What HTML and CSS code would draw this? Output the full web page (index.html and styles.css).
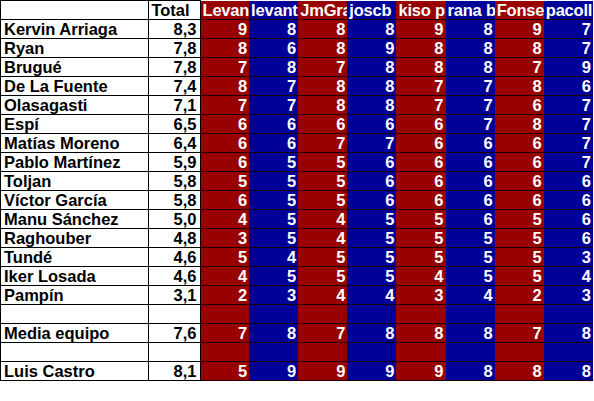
FILE: index.html
```html
<!DOCTYPE html>
<html lang="es">
<head>
<meta charset="utf-8">
<title>Notas</title>
<link rel="stylesheet" href="styles.css">
</head>
<body>
<table class="grid">
  <colgroup>
    <col class="c-name"><col class="c-total">
    <col class="c-v"><col class="c-v"><col class="c-v"><col class="c-v">
    <col class="c-v"><col class="c-v"><col class="c-v"><col class="c-v">
  </colgroup>
  <thead>
    <tr>
      <th class="name"></th><th class="total">Total</th>
      <th class="r">Levan</th><th class="b">levant</th><th class="r">JmGra</th><th class="b">joscb</th>
      <th class="r">kiso p</th><th class="b">rana b</th><th class="r">Fonse</th><th class="b">pacoll</th>
    </tr>
  </thead>
  <tbody>
    <tr><td class="name">Kervin Arriaga</td><td class="total">8,3</td><td class="r">9</td><td class="b">8</td><td class="r">8</td><td class="b">8</td><td class="r">9</td><td class="b">8</td><td class="r">9</td><td class="b">7</td></tr>
    <tr><td class="name">Ryan</td><td class="total">7,8</td><td class="r">8</td><td class="b">6</td><td class="r">8</td><td class="b">9</td><td class="r">8</td><td class="b">8</td><td class="r">8</td><td class="b">7</td></tr>
    <tr><td class="name">Brugué</td><td class="total">7,8</td><td class="r">7</td><td class="b">8</td><td class="r">7</td><td class="b">8</td><td class="r">8</td><td class="b">8</td><td class="r">7</td><td class="b">9</td></tr>
    <tr><td class="name">De La Fuente</td><td class="total">7,4</td><td class="r">8</td><td class="b">7</td><td class="r">8</td><td class="b">8</td><td class="r">7</td><td class="b">7</td><td class="r">8</td><td class="b">6</td></tr>
    <tr><td class="name">Olasagasti</td><td class="total">7,1</td><td class="r">7</td><td class="b">7</td><td class="r">8</td><td class="b">8</td><td class="r">7</td><td class="b">7</td><td class="r">6</td><td class="b">7</td></tr>
    <tr><td class="name">Espí</td><td class="total">6,5</td><td class="r">6</td><td class="b">6</td><td class="r">6</td><td class="b">6</td><td class="r">6</td><td class="b">7</td><td class="r">8</td><td class="b">7</td></tr>
    <tr><td class="name">Matías Moreno</td><td class="total">6,4</td><td class="r">6</td><td class="b">6</td><td class="r">7</td><td class="b">7</td><td class="r">6</td><td class="b">6</td><td class="r">6</td><td class="b">7</td></tr>
    <tr><td class="name">Pablo Martínez</td><td class="total">5,9</td><td class="r">6</td><td class="b">5</td><td class="r">5</td><td class="b">6</td><td class="r">6</td><td class="b">6</td><td class="r">6</td><td class="b">7</td></tr>
    <tr><td class="name">Toljan</td><td class="total">5,8</td><td class="r">5</td><td class="b">5</td><td class="r">5</td><td class="b">6</td><td class="r">6</td><td class="b">6</td><td class="r">6</td><td class="b">6</td></tr>
    <tr><td class="name">Víctor García</td><td class="total">5,8</td><td class="r">6</td><td class="b">5</td><td class="r">5</td><td class="b">6</td><td class="r">6</td><td class="b">6</td><td class="r">6</td><td class="b">6</td></tr>
    <tr><td class="name">Manu Sánchez</td><td class="total">5,0</td><td class="r">4</td><td class="b">5</td><td class="r">4</td><td class="b">5</td><td class="r">5</td><td class="b">6</td><td class="r">5</td><td class="b">6</td></tr>
    <tr><td class="name">Raghouber</td><td class="total">4,8</td><td class="r">3</td><td class="b">5</td><td class="r">4</td><td class="b">5</td><td class="r">5</td><td class="b">5</td><td class="r">5</td><td class="b">6</td></tr>
    <tr><td class="name">Tundé</td><td class="total">4,6</td><td class="r">5</td><td class="b">4</td><td class="r">5</td><td class="b">5</td><td class="r">5</td><td class="b">5</td><td class="r">5</td><td class="b">3</td></tr>
    <tr><td class="name">Iker Losada</td><td class="total">4,6</td><td class="r">4</td><td class="b">5</td><td class="r">5</td><td class="b">5</td><td class="r">4</td><td class="b">5</td><td class="r">5</td><td class="b">4</td></tr>
    <tr><td class="name">Pampín</td><td class="total">3,1</td><td class="r">2</td><td class="b">3</td><td class="r">4</td><td class="b">4</td><td class="r">3</td><td class="b">4</td><td class="r">2</td><td class="b">3</td></tr>
    <tr><td class="name"></td><td class="total"></td><td class="r"></td><td class="b"></td><td class="r"></td><td class="b"></td><td class="r"></td><td class="b"></td><td class="r"></td><td class="b"></td></tr>
    <tr><td class="name">Media equipo</td><td class="total">7,6</td><td class="r">7</td><td class="b">8</td><td class="r">7</td><td class="b">8</td><td class="r">8</td><td class="b">8</td><td class="r">7</td><td class="b">8</td></tr>
    <tr><td class="name"></td><td class="total"></td><td class="r"></td><td class="b"></td><td class="r"></td><td class="b"></td><td class="r"></td><td class="b"></td><td class="r"></td><td class="b"></td></tr>
    <tr><td class="name">Luis Castro</td><td class="total">8,1</td><td class="r">5</td><td class="b">9</td><td class="r">9</td><td class="b">9</td><td class="r">9</td><td class="b">8</td><td class="r">8</td><td class="b">8</td></tr>
  </tbody>
</table>
</body>
</html>
```
FILE: styles.css
```css
html, body {
  margin: 0;
  padding: 0;
  background: #fff;
}

.grid {
  border-collapse: collapse;
  table-layout: fixed;
  width: 593px;
  font-family: "Liberation Sans", Arial, sans-serif;
  font-weight: bold;
  font-size: 16.5px;
  line-height: 18px;
}

.c-name { width: 148px; }
.c-total { width: 51px; }
.c-v { width: 49px; }

.grid th,
.grid td {
  height: 18px;
  padding: 0 3px 0 2px;
  white-space: nowrap;
  overflow: hidden;
  font-weight: bold;
}

.grid .name {
  text-align: left;
  color: #000;
  border: 1px solid #000;
  padding-left: 3px;
}

.grid .total {
  text-align: right;
  color: #000;
  border: 1px solid #000;
}

.grid th.total {
  text-align: left;
  padding-left: 2px;
}

.grid .r,
.grid .b {
  color: #fff;
  text-align: right;
  border-top: 1px solid #1a0000;
  border-bottom: 1px solid #1a0000;
  padding-right: 2px;
}

.grid .r { background: #990000; }
.grid .b { background: #000099; }

.grid th.r,
.grid th.b {
  text-align: left;
  padding-left: 2px;
  padding-right: 0;
  letter-spacing: -0.2px;
  border-top: none;
}
```
